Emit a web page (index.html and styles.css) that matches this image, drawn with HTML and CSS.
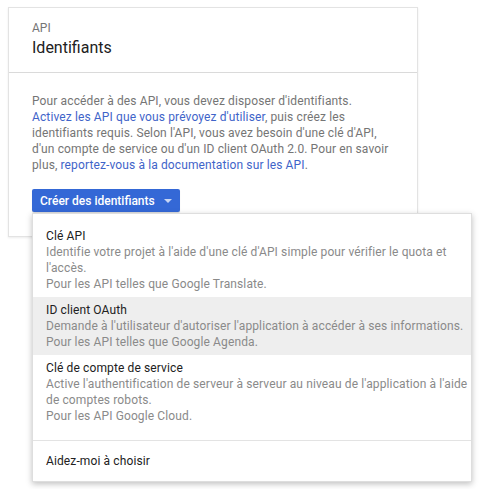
FILE: index.html
```
<!DOCTYPE html>
<html lang="fr">
<head>
<meta charset="utf-8">
<title>Identifiants</title>
<link rel="stylesheet" href="styles.css">
</head>
<body>
<div class="card">
  <div class="card-head">
    <div class="eyebrow">API</div>
    <h1 class="title">Identifiants</h1>
  </div>
  <div class="card-body">
    <p class="intro">Pour accéder à des API, vous devez disposer d'identifiants.<br><a class="link" href="#">Activez les API que vous prévoyez d'utiliser</a>, puis créez les<br>identifiants requis. Selon l'API, vous avez besoin d'une clé d'API,<br>d'un compte de service ou d'un ID client OAuth 2.0. Pour en savoir<br>plus, <a class="link" href="#">reportez-vous à la documentation sur les API</a>.</p>
    <div class="btn-wrap">
      <button class="btn">Créer des identifiants<span class="caret"></span></button>
      <div class="menu">
        <div class="menu-group">
          <div class="item">
            <div class="item-title">Clé API</div>
            <div class="item-desc">Identifie votre projet à l'aide d'une clé d'API simple pour vérifier le quota et<br>l'accès.<br>Pour les API telles que Google Translate.</div>
          </div>
          <div class="item item-hover">
            <div class="item-title">ID client OAuth</div>
            <div class="item-desc">Demande à l'utilisateur d'autoriser l'application à accéder à ses informations.<br>Pour les API telles que Google Agenda.</div>
          </div>
          <div class="item">
            <div class="item-title">Clé de compte de service</div>
            <div class="item-desc">Active l'authentification de serveur à serveur au niveau de l'application à l'aide<br>de comptes robots.<br>Pour les API Google Cloud.</div>
          </div>
        </div>
        <div class="menu-foot">Aidez-moi à choisir</div>
      </div>
    </div>
  </div>
</div>
</body>
</html>
```
FILE: styles.css
```
html, body {
  margin: 0;
  padding: 0;
  background: #fff;
}
html {
  min-height: 489px;
}
body {
  min-height: 489px;
  box-sizing: border-box;
  font-family: Roboto, "Liberation Sans", sans-serif;
  padding: 7px 0 0 8px;
}
.card {
  width: 408px;
  border: 1px solid #e3e3e3;
  box-shadow: 0 1px 2px rgba(0,0,0,0.08);
  background: #fff;
}
.card-head {
  padding: 12px 23px 0;
  height: 52px;
  border-bottom: 1px solid #dadada;
}
.eyebrow {
  font-size: 12px;
  line-height: 16px;
  color: #757575;
}
.title {
  margin: 0;
  font-size: 16px;
  font-weight: 400;
  line-height: 24px;
  color: #212121;
}
.card-body {
  padding: 20px 23px 24px;
}
.intro {
  margin: 0;
  font-size: 12px;
  letter-spacing: 0.12px;
  line-height: 16px;
  color: #757575;
  white-space: nowrap;
}
.link {
  color: #3f64c9;
  text-decoration: none;
}
.btn-wrap {
  position: relative;
  margin-top: 16px;
}
.btn {
  display: flex;
  align-items: center;
  height: 23px;
  padding: 0 8px;
  border: 0;
  border-radius: 2px;
  background: #3468d6;
  color: #fff;
  font-family: inherit;
  font-size: 12px;
  font-weight: 500;
  box-shadow: 0 1px 1px rgba(0,0,0,0.15);
}
.caret {
  display: inline-block;
  margin-left: 9px;
  width: 0;
  height: 0;
  border-left: 4px solid transparent;
  border-right: 4px solid transparent;
  border-top: 4px solid #c8d6f3;
}
.menu {
  position: absolute;
  left: 0;
  top: 24px;
  width: 438px;
  background: #fff;
  border: 1px solid #dedede;
  box-shadow: 0 2px 6px rgba(0,0,0,0.25);
  z-index: 2;
}
.menu-group {
  padding: 9px 0 11px;
  border-bottom: 1px solid #e3e3e3;
}
.item {
  padding: 5px 13px;
  font-size: 12px;
  letter-spacing: 0.12px;
  line-height: 16px;
  white-space: nowrap;
}
.item-hover {
  background: #eeeeee;
}
.item-title {
  color: #212121;
}
.item-desc {
  color: #8a8a8a;
}
.menu-foot {
  padding: 12px 13px 12px;
  font-size: 12px;
  letter-spacing: 0.12px;
  line-height: 16px;
  color: #212121;
}
```
